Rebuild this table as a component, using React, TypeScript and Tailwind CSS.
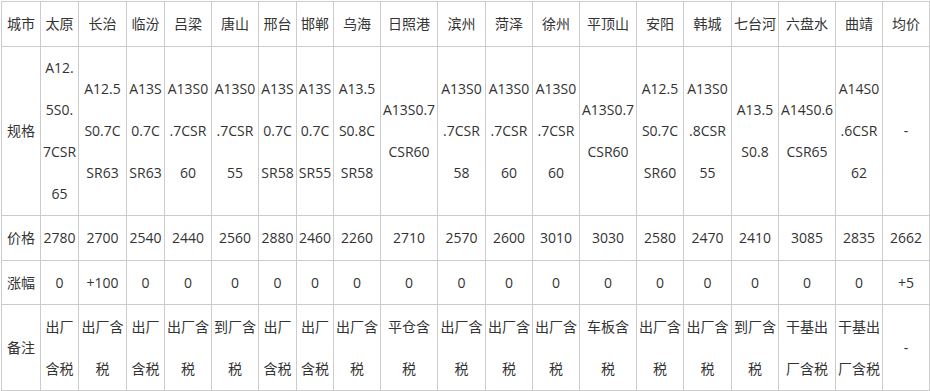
import React from "react";

type Col = {
  city: string;
  spec: string;
  price: string;
  change: string;
  note: string;
};

const cols: Col[] = [
  { city: "太原", spec: "A12.\n5S0.\n7CSR\n65", price: "2780", change: "0", note: "出厂\n含税" },
  { city: "长治", spec: "A12.5\nS0.7C\nSR63", price: "2700", change: "+100", note: "出厂含\n税" },
  { city: "临汾", spec: "A13S\n0.7C\nSR63", price: "2540", change: "0", note: "出厂\n含税" },
  { city: "吕梁", spec: "A13S0\n.7CSR\n60", price: "2440", change: "0", note: "出厂含\n税" },
  { city: "唐山", spec: "A13S0\n.7CSR\n55", price: "2560", change: "0", note: "到厂含\n税" },
  { city: "邢台", spec: "A13S\n0.7C\nSR58", price: "2880", change: "0", note: "出厂\n含税" },
  { city: "邯郸", spec: "A13S\n0.7C\nSR55", price: "2460", change: "0", note: "出厂\n含税" },
  { city: "乌海", spec: "A13.5\nS0.8C\nSR58", price: "2260", change: "0", note: "出厂含\n税" },
  { city: "日照港", spec: "A13S0.7\nCSR60", price: "2710", change: "0", note: "平仓含\n税" },
  { city: "滨州", spec: "A13S0\n.7CSR\n58", price: "2570", change: "0", note: "出厂含\n税" },
  { city: "菏泽", spec: "A13S0\n.7CSR\n60", price: "2600", change: "0", note: "出厂含\n税" },
  { city: "徐州", spec: "A13S0\n.7CSR\n60", price: "3010", change: "0", note: "出厂含\n税" },
  { city: "平顶山", spec: "A13S0.7\nCSR60", price: "3030", change: "0", note: "车板含\n税" },
  { city: "安阳", spec: "A12.5\nS0.7C\nSR60", price: "2580", change: "0", note: "出厂含\n税" },
  { city: "韩城", spec: "A13S0\n.8CSR\n55", price: "2470", change: "0", note: "出厂含\n税" },
  { city: "七台河", spec: "A13.5\nS0.8", price: "2410", change: "0", note: "到厂含\n税" },
  { city: "六盘水", spec: "A14S0.6\nCSR65", price: "3085", change: "0", note: "干基出\n厂含税" },
  { city: "曲靖", spec: "A14S0\n.6CSR\n62", price: "2835", change: "0", note: "干基出\n厂含税" },
  { city: "均价", spec: "-", price: "2662", change: "+5", note: "-" },
];

const Cell = ({ children }: { children: React.ReactNode }) => (
  <div className="flex items-center justify-center text-center whitespace-pre-line leading-[42px] px-px border-r border-b border-[#cccccc] overflow-hidden">
    {children}
  </div>
);

const App = () => {
  return (
    <div className="w-[930px] h-[391px] bg-white pt-px pl-px">
      <div
        className="grid grid-cols-[39px_38px_48px_38px_47px_47px_38px_37px_47px_57px_48px_47px_47px_57px_47px_48px_47px_57px_47px_47px] grid-rows-[45px_169px_45px_44px_86px] grid-flow-col w-max border-l border-t border-[#cccccc] text-[14px] text-[#333333]"
        style={{ fontFamily: '"Open Sans", "Noto Sans CJK SC", sans-serif' }}
      >
        <Cell>城市</Cell>
        <Cell>规格</Cell>
        <Cell>价格</Cell>
        <Cell>涨幅</Cell>
        <Cell>备注</Cell>
        {cols.map((c) => (
          <React.Fragment key={c.city}>
            <Cell>{c.city}</Cell>
            <Cell>{c.spec}</Cell>
            <Cell>{c.price}</Cell>
            <Cell>{c.change}</Cell>
            <Cell>{c.note}</Cell>
          </React.Fragment>
        ))}
      </div>
    </div>
  );
};

export default App;
